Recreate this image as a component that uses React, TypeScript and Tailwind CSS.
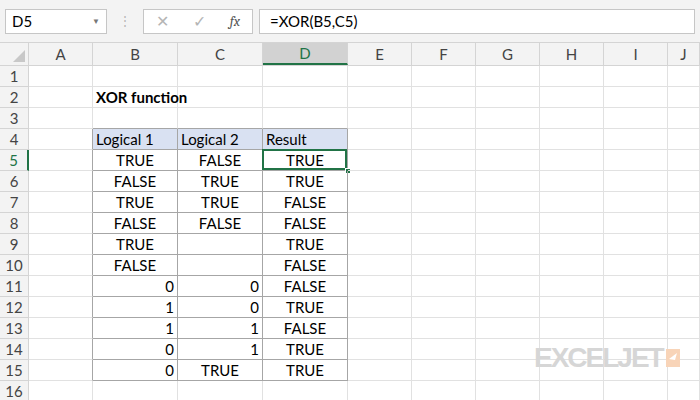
import React from "react";

const cols = ["A", "B", "C", "D", "E", "F", "G", "H", "I", "J"];
const widths = [64, 85, 85, 85, 64, 64, 64, 64, 64, 32];

type Cell = { v: string; a: "l" | "c" | "r" };
const t = (v: string): Cell => ({ v, a: "c" });
const n = (v: string): Cell => ({ v, a: "r" });
const e: Cell = { v: "", a: "c" };

const data: Cell[][] = [
  [t("TRUE"), t("FALSE"), t("TRUE")],
  [t("FALSE"), t("TRUE"), t("TRUE")],
  [t("TRUE"), t("TRUE"), t("FALSE")],
  [t("FALSE"), t("FALSE"), t("FALSE")],
  [t("TRUE"), e, t("TRUE")],
  [t("FALSE"), e, t("FALSE")],
  [n("0"), n("0"), t("FALSE")],
  [n("1"), n("0"), t("TRUE")],
  [n("1"), n("1"), t("FALSE")],
  [n("0"), n("1"), t("TRUE")],
  [n("0"), t("TRUE"), t("TRUE")],
];

function cellContent(row: number, ci: number): { cell: Cell | null; bold?: boolean; head?: boolean } {
  if (row === 2 && ci === 1) return { cell: { v: "XOR function", a: "l" }, bold: true };
  if (row === 4 && ci >= 1 && ci <= 3)
    return { cell: { v: ["Logical 1", "Logical 2", "Result"][ci - 1], a: "l" }, head: true };
  if (row >= 5 && row <= 15 && ci >= 1 && ci <= 3) return { cell: data[row - 5][ci - 1] };
  return { cell: null };
}

export default function App() {
  const rows = Array.from({ length: 16 }, (_, i) => i + 1);
  return (
    <div className="relative w-[700px] h-[400px] overflow-hidden bg-white text-[15px] text-black" style={{ fontFamily: "Lato, 'Open Sans', sans-serif" }}>
      {/* formula bar */}
      <div className="h-[43px] bg-[#f3f3f3] flex items-center gap-[6px] px-[5px] border-b border-[#d4d4d4]">
        <div className="w-[102px] h-[25px] bg-white border border-[#c6c6c6] flex items-center justify-between px-[6px]">
          <span>D5</span>
          <span className="text-[8px] text-[#777]">▼</span>
        </div>
        <div className="w-[24px] flex justify-center text-[#b5b5b5] text-[12px] leading-none">⋮</div>
        <div className="w-[110px] h-[25px] bg-white border border-[#c6c6c6] flex items-center justify-around text-[#b5b5b5]">
          <span className="text-[16px]">✕</span>
          <span className="text-[16px]">✓</span>
          <span className="italic font-serif text-[#555] text-[14px]">fx</span>
        </div>
        <div className="flex-1 h-[25px] bg-white border border-[#c6c6c6] flex items-center px-[10px]">=XOR(B5,C5)</div>
      </div>
      {/* column headers */}
      <div className="flex h-[23px] bg-[#f3f3f3] border-b border-[#d4d4d4]">
        <div className="w-[29px] border-r border-[#d4d4d4] flex items-end justify-end p-[3px]">
          <div className="w-0 h-0 border-l-[12px] border-l-transparent border-b-[12px] border-b-[#c8c8c8]" />
        </div>
        {cols.map((c, i) => (
          <div
            key={c}
            style={{ width: widths[i] }}
            className={`flex items-center justify-center border-r border-[#d4d4d4] ${c === "D" ? "bg-[#d2d2d2] border-b-2 border-b-[#217346] text-[#217346]" : "text-[#444]"}`}
          >
            {c}
          </div>
        ))}
      </div>
      {rows.map((r) => (
        <div key={r} className="flex h-[21px]">
          <div className={`w-[29px] shrink-0 flex items-center justify-center bg-[#f3f3f3] border-b border-[#d4d4d4] ${r === 5 ? "bg-[#d2d2d2] border-r-2 border-r-[#217346] text-[#217346]" : "border-r border-r-[#d4d4d4] text-[#444]"}`}>
            {r}
          </div>
          {cols.map((c, ci) => {
            const { cell, bold, head } = cellContent(r, ci);
            const inTable = r >= 4 && r <= 15 && ci >= 1 && ci <= 3;
            const leftOfTable = r >= 4 && r <= 15 && ci === 0;
            const aboveTable = r === 3 && ci >= 1 && ci <= 3;
            const active = r === 5 && ci === 3;
            return (
              <div
                key={c}
                style={{ width: widths[ci] }}
                className={`relative shrink-0 flex items-center px-[3px] whitespace-nowrap border-r border-b
                  ${inTable ? "border-[#a6a6a6]" : "border-[#e1e1e1]"}
                  ${leftOfTable ? "border-r-[#a6a6a6]" : ""}
                  ${aboveTable ? "border-b-[#a6a6a6]" : ""}
                  ${head ? "bg-[#d9e1f2]" : ""}
                  ${bold ? "font-bold overflow-visible" : ""}
                  ${cell?.a === "c" ? "justify-center" : cell?.a === "r" ? "justify-end" : "justify-start"}`}
              >
                {cell?.v}
                {active && (
                  <>
                    <div className="absolute -left-[1px] -top-[1px] w-[calc(100%+1px)] h-[calc(100%+1px)] border-2 border-[#217346]" />
                    <div className="absolute -right-[4px] -bottom-[4px] w-[6px] h-[6px] bg-[#217346] border border-white" />
                  </>
                )}
              </div>
            );
          })}
        </div>
      ))}
      {/* watermark logo */}
      <div className="absolute left-[534px] top-[344px] flex items-center gap-[3px]">
        <span className="text-[28px] font-black tracking-[-2px] text-[#d6d6d6] leading-none" style={{ fontFamily: "'Liberation Sans', Arial, sans-serif" }}>EXCELJET</span>
        <svg width="14" height="18" viewBox="0 0 14 18">
          <rect width="14" height="18" fill="#f8d4b8" />
          <path d="M11 4 L3 10 L9 11 Z" fill="#fff" />
        </svg>
      </div>
    </div>
  );
}
